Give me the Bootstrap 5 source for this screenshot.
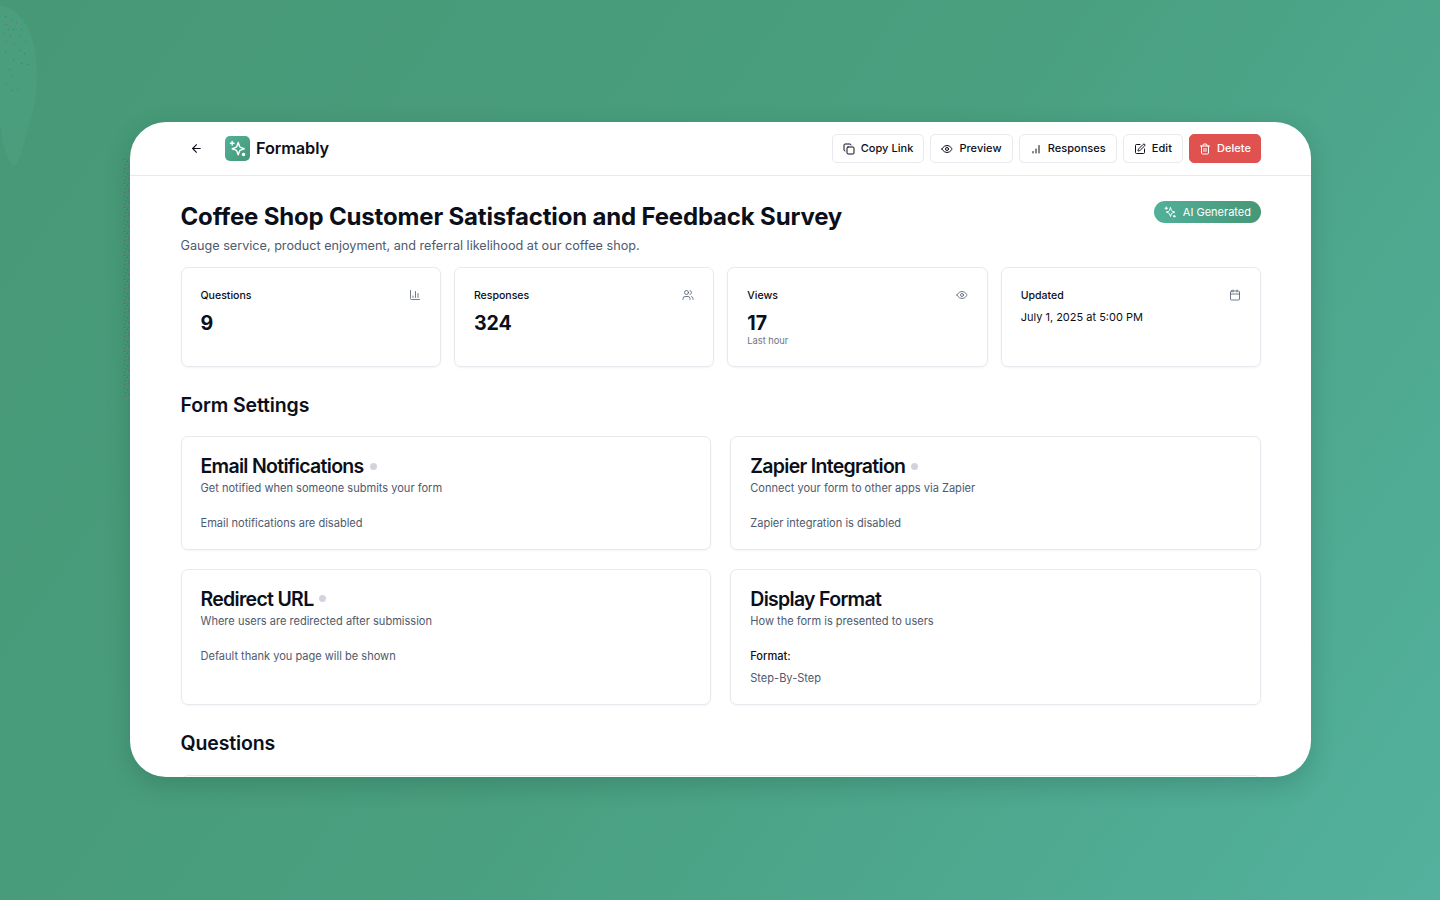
<!DOCTYPE html>
<html lang="en">
<head>
    <meta charset="UTF-8">
    <title>Formably</title>
    <link href="https://cdn.jsdelivr.net/npm/bootstrap@5.3.3/dist/css/bootstrap.min.css" rel="stylesheet">
    <style>
        html, body { height: 100%; }
        body { font-family: Inter, "Liberation Sans", sans-serif; color: #0b0f1a; background: linear-gradient(125deg, #479876 0%, #499f7f 50%, #53b19d 100%); padding: 122px 129px 123px 130px; overflow: hidden; position: relative; }
        .ic { width: 1em; height: 1em; fill: none; stroke: currentColor; stroke-width: 2; stroke-linecap: round; stroke-linejoin: round; flex: none; }
        .bg-blob { position: absolute; left: 0; top: 0; width: 40px; height: 170px; }
        .bg-dots { position: absolute; left: 122px; top: 158px; width: 8px; height: 240px; }
        .app-window { position: relative; height: 655px; background: #fff; border-radius: 36px; overflow: hidden; box-shadow: 0 8px 24px rgba(20, 60, 50, .22); }
        .app-head { height: 54px; padding: 0 50px 0 60px; border-bottom: 1px solid #e7e9ee; }
        .back-arrow { font-size: 13px; color: #0b0f1a; line-height: 1; }
        .logo-box { width: 25px; height: 25px; margin-left: 22px; border-radius: 5px; background: linear-gradient(135deg, #52b09a, #469776); color: #fff; font-size: 17px; }
        .logo-name { font-size: 16.3px; font-weight: 600; margin-left: 6px; letter-spacing: -.1px; }
        .head-actions { gap: 6px; }
        .head-btn { height: 29px; font-size: 11px; letter-spacing: .05px; font-weight: 500; color: #0b0f1a; background: #fff; border: 1px solid #e7e9ee; border-radius: 5px; padding: 0 10px; gap: 6px; }
        .head-btn .ic { font-size: 12px; }
        .head-btn.is-danger { background: #e0524f; border-color: #e0524f; color: #fff; padding: 0 9px; }
        .page-body { padding: 25px 50px 0 50.5px; }
        .page-title { font-size: 24px; font-weight: 700; line-height: 32px; margin: 0; letter-spacing: -.17px; }
        .page-sub { font-size: 12.65px; color: #4e5a6e; line-height: 18px; margin: 4px 0 12px; }
        .ai-pill { height: 22px; padding: 0 10px; gap: 7px; font-size: 11px; font-weight: 400; color: #fff; border-radius: 11px; background: linear-gradient(90deg, #52b09a, #469776); }
        .ai-pill .ic { font-size: 12px; }
        .stat-row { --bs-gutter-x: 13px; }
        .stat-box { height: 100px; padding: 19px; border: 1px solid #e7e9ee; border-radius: 7px; box-shadow: 0 1px 2px rgba(20, 30, 50, .05); }
        .stat-label { font-size: 10.55px; font-weight: 500; line-height: 18px; }
        .stat-ic { font-size: 12px; color: #4e5a6e; margin-bottom: 2px; stroke-width: 1.6; }
        .stat-num { font-size: 19.6px; font-weight: 700; line-height: 24px; margin-top: 6px; }
        .stat-date { font-size: 11px; line-height: 16px; margin-top: 4px; }
        .stat-note { font-size: 9.3px; color: #6b7485; line-height: 12px; }
        .sec-title { font-size: 19.5px; font-weight: 600; line-height: 26px; margin: 0; letter-spacing: -.13px; }
        .form-sec { margin-top: 25px; margin-bottom: 18px; }
        .set-row { --bs-gutter-x: 19px; }
        .set-box { padding: 17px 19px; border: 1px solid #e7e9ee; border-radius: 7px; box-shadow: 0 1px 2px rgba(20, 30, 50, .05); }
        .set-a { height: 114px; margin-bottom: 19px; }
        .set-b { height: 136px; padding-top: 16.5px; }
        .set-title { font-size: 19.5px; font-weight: 600; line-height: 24px; margin: 0; letter-spacing: -.7px; }
        .off-dot { width: 7px; height: 7px; border-radius: 50%; background: #d1d5db; margin-left: 6px; }
        .set-desc { font-size: 11.05px; color: #4e5a6e; line-height: 16px; margin: 2px 0 19px; }
        .set-text { font-size: 11.05px; color: #4e5a6e; line-height: 16px; margin: 0; }
        .set-label { font-size: 11.05px; font-weight: 500; line-height: 16px; margin: 0 0 6px; }
        .q-sec { margin-top: 25px; }
        .q-box { height: 40px; margin-top: 19px; border: 1px solid #e7e9ee; border-radius: 7px; }
    </style>
</head>
<body>
<!-- icon set -->
<svg width="0" height="0" class="position-absolute">
    <defs>
        <symbol id="i-back" viewBox="0 0 24 24"><path d="m12 19-7-7 7-7"/><path d="M19 12H5"/></symbol>
        <symbol id="i-spark" viewBox="0 0 24 24"><path d="M13 3.500l2 5.700a2 2 0 0 0 1.200 1.200l5.300 1.900-5.300 1.900a2 2 0 0 0-1.200 1.200L13 21l-2-5.600a2 2 0 0 0-1.200-1.200l-5.300-1.900 5.300-1.900a2 2 0 0 0 1.200-1.200z"/><path d="M4.500 2v5"/><path d="M2 4.500h5"/><circle cx="20.500" cy="20.500" r="1.500" fill="currentColor"/></symbol>
        <symbol id="i-copy" viewBox="0 0 24 24"><rect x="8" y="8" width="14" height="14" rx="2"/><path d="M4 16c-1.100 0-2-.9-2-2V4c0-1.100.9-2 2-2h10c1.100 0 2 .9 2 2"/></symbol>
        <symbol id="i-eye" viewBox="0 0 24 24"><path d="M2 12s3-7 10-7 10 7 10 7-3 7-10 7-10-7-10-7Z"/><circle cx="12" cy="12" r="3"/></symbol>
        <symbol id="i-signal" viewBox="0 0 24 24"><path d="M6 20v-3"/><path d="M12 20v-8"/><path d="M18 20V5"/></symbol>
        <symbol id="i-pen" viewBox="0 0 24 24"><path d="M12 3H5a2 2 0 0 0-2 2v14a2 2 0 0 0 2 2h14a2 2 0 0 0 2-2v-7"/><path d="M18.375 2.625a1 1 0 0 1 3 3l-9.013 9.014a2 2 0 0 1-.853.505l-2.873.84a.5.500 0 0 1-.62-.62l.84-2.873a2 2 0 0 1 .506-.852z"/></symbol>
        <symbol id="i-trash" viewBox="0 0 24 24"><path d="M3 6h18"/><path d="M19 6v14c0 1-1 2-2 2H7c-1 0-2-1-2-2V6"/><path d="M8 6V4c0-1 1-2 2-2h4c1 0 2 1 2 2v2"/><path d="M10 11v6"/><path d="M14 11v6"/></symbol>
        <symbol id="i-chart" viewBox="0 0 24 24"><path d="M3 3v16a2 2 0 0 0 2 2h16"/><path d="M18 17V9"/><path d="M13 17V5"/><path d="M8 17v-3"/></symbol>
        <symbol id="i-users" viewBox="0 0 24 24"><path d="M16 21v-2a4 4 0 0 0-4-4H6a4 4 0 0 0-4 4v2"/><circle cx="9" cy="7" r="4"/><path d="M22 21v-2a4 4 0 0 0-3-3.870"/><path d="M16 3.130a4 4 0 0 1 0 7.750"/></symbol>
        <symbol id="i-cal" viewBox="0 0 24 24"><path d="M8 2v4"/><path d="M16 2v4"/><rect x="3" y="4" width="18" height="18" rx="2"/><path d="M3 10h18"/></symbol>
    </defs>
</svg>

<!-- background decoration -->
<svg class="bg-blob" viewBox="0 0 40 170">
    <path d="M0 6 C14 6 30 22 35 50 C39 80 37 100 30 122 C24 142 20 165 14 165 C8 165 3 145 0 125 Z" fill="#4a9e7d"/>
    <path fill="#5d6c72" d="M5 16h1v1H5zM11 19h1v1h-1zM6 24h1v1H6zM16 22h1v1h-1zM8 29h1v1H8zM13 29h1v1h-1zM21 29h1v1h-1zM4 33h1v1H4zM10 36h1v1h-1zM19 35h1v1h-1zM6 41h1v1H6zM14 43h1v1h-1zM25 41h1v1h-1zM5 52h1v1H5zM19 50h1v1h-1zM24 53h1v1h-1zM13 60h1v1h-1zM21 63h1v1h-1zM27 64h1v1h-1zM9 69h1v1H9zM12 75h1v1h-1zM6 83h1v1H6zM11 90h1v1h-1zM17 89h1v1h-1z"/>
</svg>
<svg class="bg-dots">
    <defs>
        <pattern id="dot-strip" width="8" height="12" patternUnits="userSpaceOnUse">
            <path fill="#5d6c72" d="M2 1h1v1H2zM5 3h1v1H5zM3 6h1v1H3zM6 8h1v1H6zM2 10h1v1H2z"/>
        </pattern>
    </defs>
    <rect width="8" height="240" fill="url(#dot-strip)"/>
</svg>

<div class="app-window">
    <header class="app-head d-flex align-items-center">
        <svg class="ic back-arrow"><use href="#i-back"/></svg>
        <div class="logo-box d-flex align-items-center justify-content-center"><svg class="ic"><use href="#i-spark"/></svg></div>
        <span class="logo-name">Formably</span>
        <div class="d-flex ms-auto head-actions">
            <button class="head-btn d-flex align-items-center" type="button"><svg class="ic"><use href="#i-copy"/></svg>Copy Link</button>
            <button class="head-btn d-flex align-items-center" type="button"><svg class="ic"><use href="#i-eye"/></svg>Preview</button>
            <button class="head-btn d-flex align-items-center" type="button"><svg class="ic"><use href="#i-signal"/></svg>Responses</button>
            <button class="head-btn d-flex align-items-center" type="button"><svg class="ic"><use href="#i-pen"/></svg>Edit</button>
            <button class="head-btn is-danger d-flex align-items-center" type="button"><svg class="ic"><use href="#i-trash"/></svg>Delete</button>
        </div>
    </header>

    <main class="page-body">
        <div class="d-flex justify-content-between align-items-start">
            <div>
                <h1 class="page-title">Coffee Shop Customer Satisfaction and Feedback Survey</h1>
                <p class="page-sub">Gauge service, product enjoyment, and referral likelihood at our coffee shop.</p>
            </div>
            <span class="ai-pill d-inline-flex align-items-center"><svg class="ic"><use href="#i-spark"/></svg>AI Generated</span>
        </div>

        <div class="row row-cols-4 stat-row">
            <div class="col">
                <div class="stat-box">
                    <div class="d-flex justify-content-between align-items-center"><span class="stat-label">Questions</span><svg class="ic stat-ic"><use href="#i-chart"/></svg></div>
                    <div class="stat-num">9</div>
                </div>
            </div>
            <div class="col">
                <div class="stat-box">
                    <div class="d-flex justify-content-between align-items-center"><span class="stat-label">Responses</span><svg class="ic stat-ic"><use href="#i-users"/></svg></div>
                    <div class="stat-num">324</div>
                </div>
            </div>
            <div class="col">
                <div class="stat-box">
                    <div class="d-flex justify-content-between align-items-center"><span class="stat-label">Views</span><svg class="ic stat-ic"><use href="#i-eye"/></svg></div>
                    <div class="stat-num">17</div>
                    <div class="stat-note">Last hour</div>
                </div>
            </div>
            <div class="col">
                <div class="stat-box">
                    <div class="d-flex justify-content-between align-items-center"><span class="stat-label">Updated</span><svg class="ic stat-ic"><use href="#i-cal"/></svg></div>
                    <div class="stat-date">July 1, 2025 at 5:00 PM</div>
                </div>
            </div>
        </div>

        <h2 class="sec-title form-sec">Form Settings</h2>
        <div class="row set-row">
            <div class="col-6">
                <div class="set-box set-a">
                    <h3 class="set-title d-flex align-items-center">Email Notifications<span class="off-dot"></span></h3>
                    <p class="set-desc">Get notified when someone submits your form</p>
                    <p class="set-text">Email notifications are disabled</p>
                </div>
            </div>
            <div class="col-6">
                <div class="set-box set-a">
                    <h3 class="set-title d-flex align-items-center">Zapier Integration<span class="off-dot"></span></h3>
                    <p class="set-desc">Connect your form to other apps via Zapier</p>
                    <p class="set-text">Zapier integration is disabled</p>
                </div>
            </div>
            <div class="col-6">
                <div class="set-box set-b">
                    <h3 class="set-title d-flex align-items-center">Redirect URL<span class="off-dot"></span></h3>
                    <p class="set-desc">Where users are redirected after submission</p>
                    <p class="set-text">Default thank you page will be shown</p>
                </div>
            </div>
            <div class="col-6">
                <div class="set-box set-b">
                    <h3 class="set-title">Display Format</h3>
                    <p class="set-desc">How the form is presented to users</p>
                    <p class="set-label">Format:</p>
                    <p class="set-text">Step-By-Step</p>
                </div>
            </div>
        </div>

        <h2 class="sec-title q-sec">Questions</h2>
        <div class="q-box"></div>
    </main>
</div>
<script src="https://cdn.jsdelivr.net/npm/bootstrap@5.3.3/dist/js/bootstrap.bundle.min.js"></script>
</body>
</html>
